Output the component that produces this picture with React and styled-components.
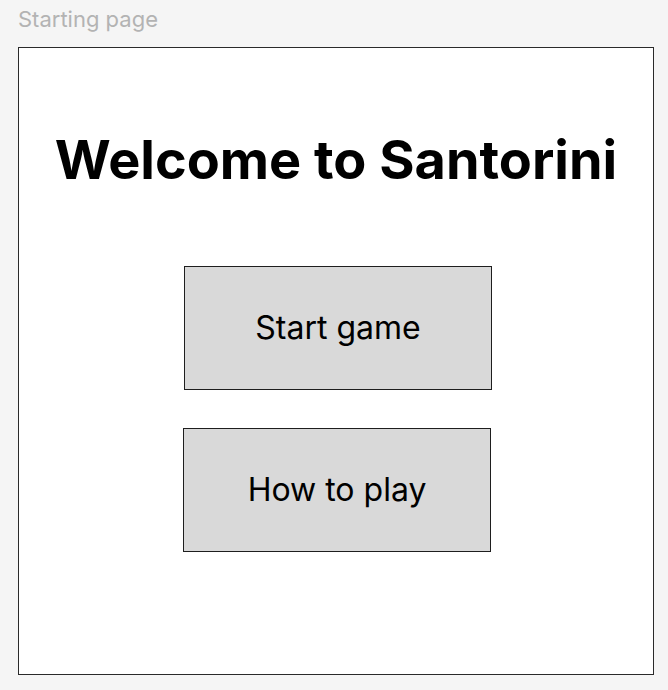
import React from "react";
import styled, { createGlobalStyle } from "styled-components";

const GlobalStyle = createGlobalStyle`
  html, body {
    margin: 0;
    padding: 0;
    background: #f5f5f5;
  }
  body {
    font-family: Inter, "Noto Sans", sans-serif;
  }
`;

const Page = styled.div`
  width: 668px;
  height: 690px;
  padding: 5px 14px 0 18px;
  box-sizing: border-box;
  display: flex;
  flex-direction: column;
`;

const FrameLabel = styled.div`
  font-size: 22px;
  line-height: 28px;
  color: #b3b3b3;
  height: 42px;
`;

const Frame = styled.div`
  width: 636px;
  height: 628px;
  box-sizing: border-box;
  background: #ffffff;
  border: 1px solid #2a2a2a;
  display: flex;
  flex-direction: column;
  align-items: center;
  padding-top: 80px;
`;

const Title = styled.h1`
  margin: 0;
  font-size: 54px;
  line-height: 64px;
  font-weight: 700;
  color: #000000;
`;

const Actions = styled.div`
  margin-top: 74px;
  padding-left: 2px;
  display: flex;
  flex-direction: column;
  align-items: center;
  gap: 38px;
`;

const MenuButton = styled.button`
  width: 308px;
  height: 124px;
  box-sizing: border-box;
  background: #d9d9d9;
  border: 1px solid #1e1e1e;
  font-family: Inter, "Noto Sans", sans-serif;
  font-size: 32px;
  font-weight: 400;
  color: #000000;
  cursor: pointer;
  padding: 0 0 2px;
  margin-left: ${({ $shift }) => $shift || 0}px;
`;

export default function App() {
  return (
    <>
      <GlobalStyle />
      <Page>
        <FrameLabel>Starting page</FrameLabel>
        <Frame>
          <Title>Welcome to Santorini</Title>
          <Actions>
            <MenuButton $shift={2}>Start game</MenuButton>
            <MenuButton>How to play</MenuButton>
          </Actions>
        </Frame>
      </Page>
    </>
  );
}
